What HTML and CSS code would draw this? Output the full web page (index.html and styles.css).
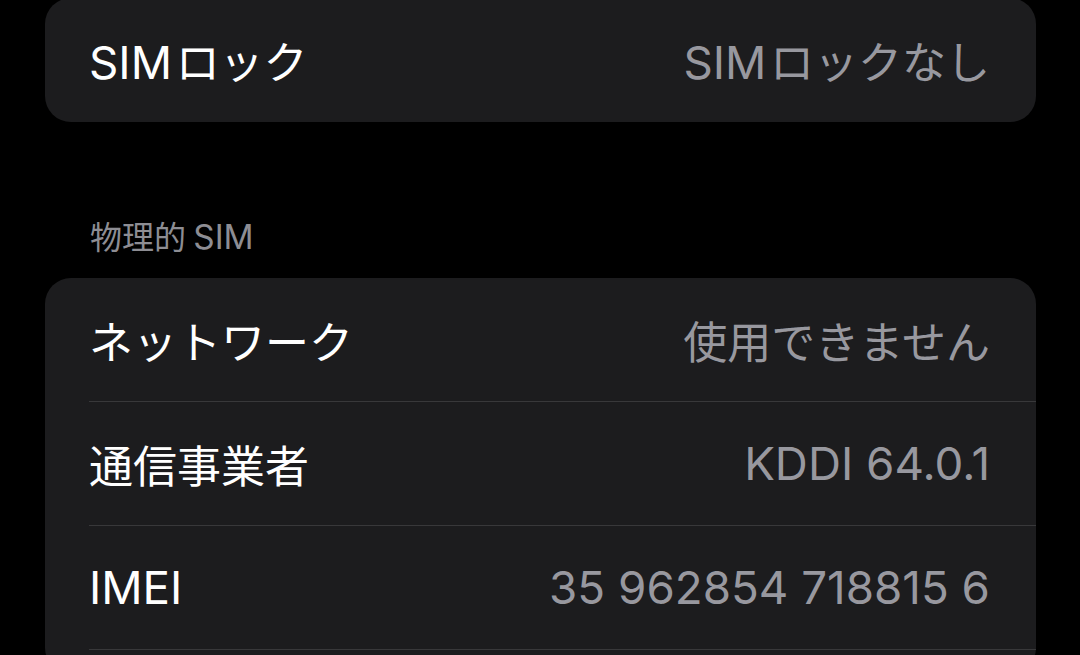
FILE: index.html
```html
<!DOCTYPE html>
<html lang="ja">
  <head>
    <meta charset="UTF-8" />
    <meta name="viewport" content="width=device-width, initial-scale=1.0" />
    <title>情報</title>
    <link rel="stylesheet" href="styles.css">
  </head>
  <body>
    <div class="page">
      <div class="group group-top">
        <div class="row">
          <span class="label"><span class="en gap">SIM</span>ロック</span>
          <span class="value"><span class="en gap">SIM</span>ロックなし</span>
        </div>
      </div>

      <div class="section-title">物理的<span class="en gap-before">SIM</span></div>

      <div class="group">
        <div class="row">
          <span class="label">ネットワーク</span>
          <span class="value">使用できません</span>
        </div>
        <div class="row">
          <span class="label">通信事業者</span>
          <span class="value en">KDDI 64.0.1</span>
        </div>
        <div class="row">
          <span class="label en">IMEI</span>
          <span class="value en">35 962854 718815 6</span>
        </div>
      </div>
    </div>
  </body>
</html>
```

FILE: styles.css
```css
html,
body {
  margin: 0;
  padding: 0;
  background-color: #000;
}

body {
  font-family: "Inter", "Noto Sans CJK JP", sans-serif;
  color: #fff;
  overflow: hidden;
}

.page {
  padding: 0 44px 0 45px;
}

.group {
  background-color: #1c1c1e;
  border-radius: 26px;
  padding-bottom: 24px;
}

.group-top {
  margin-top: -2px;
  padding-bottom: 0;
}

.row {
  display: flex;
  justify-content: space-between;
  align-items: center;
  height: 123px;
  margin-left: 44px;
  padding-right: 46px;
  border-bottom: 1px solid #38383a;
  font-size: 44px;
}

.group-top .row {
  height: 124px;
  border-bottom: none;
}

.label {
  color: #fff;
}

.value {
  color: #98989f;
}

/* latin text runs a little larger than the kana next to it */
.en {
  font-size: 1.04em;
}

.label .en,
.value .en {
  font-size: 1.04em;
}

.gap {
  margin-right: 0.08em;
}

.gap-before {
  margin-left: 0.22em;
}

.section-title {
  margin: 95px 0 20px 45px;
  line-height: 40px;
  font-size: 32px;
  color: #8d8d93;
}
```
